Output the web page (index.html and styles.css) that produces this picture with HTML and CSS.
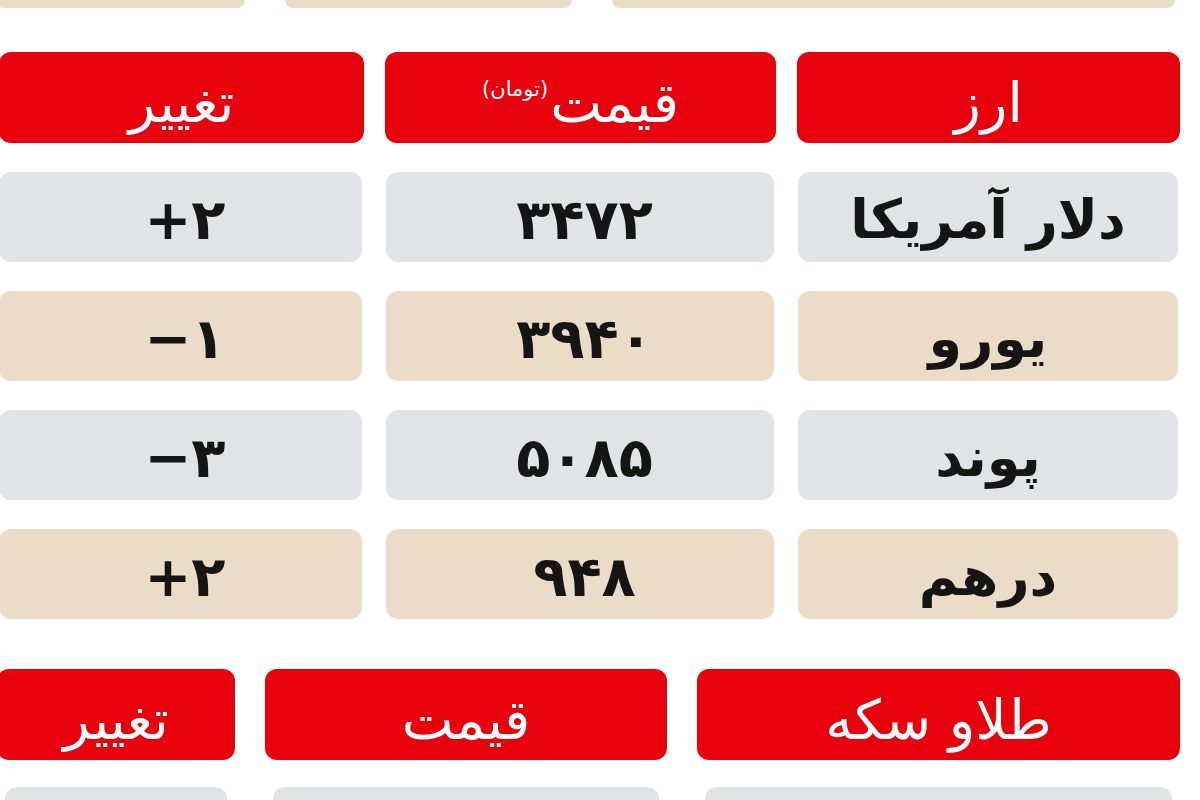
FILE: index.html
```html
<!DOCTYPE html>
<html lang="fa" dir="rtl">
<head>
<meta charset="utf-8">
<title>نرخ ارز</title>
<link rel="stylesheet" href="styles.css">
</head>
<body>
<div class="page">
  <div class="row partial-top">
    <div class="cell beige"></div>
    <div class="cell beige"></div>
    <div class="cell beige"></div>
  </div>

  <section class="table currency">
    <div class="row head">
      <div class="cell red">ارز</div>
      <div class="cell red">قیمت<sup>(تومان)</sup></div>
      <div class="cell red">تغییر</div>
    </div>
    <div class="row data">
      <div class="cell grey">دلار آمریکا</div>
      <div class="cell grey num">۳۴۷۲</div>
      <div class="cell grey num ltr">+۲</div>
    </div>
    <div class="row data">
      <div class="cell beige">یورو</div>
      <div class="cell beige num">۳۹۴۰</div>
      <div class="cell beige num ltr">−۱</div>
    </div>
    <div class="row data">
      <div class="cell grey">پوند</div>
      <div class="cell grey num">۵۰۸۵</div>
      <div class="cell grey num ltr">−۳</div>
    </div>
    <div class="row data">
      <div class="cell beige">درهم</div>
      <div class="cell beige num">۹۴۸</div>
      <div class="cell beige num ltr">+۲</div>
    </div>
  </section>

  <section class="table gold">
    <div class="row head">
      <div class="cell red">طلاو سکه</div>
      <div class="cell red">قیمت</div>
      <div class="cell red">تغییر</div>
    </div>
    <div class="row data partial-bottom">
      <div class="cell grey"></div>
      <div class="cell grey"></div>
      <div class="cell grey"></div>
    </div>
  </section>
</div>
</body>
</html>
```

FILE: styles.css
```css
html, body {
  margin: 0;
  padding: 0;
  background: #ffffff;
}

body {
  width: 1200px;
  height: 800px;
  overflow: hidden;
  font-family: "DejaVu Sans", "Noto Sans", sans-serif;
  direction: rtl;
}

.page {
  display: flex;
  flex-direction: column;
}

.row {
  display: grid;
  direction: rtl;
}

.cell {
  display: flex;
  align-items: center;
  justify-content: center;
  border-radius: 12px;
  box-sizing: border-box;
}

.red {
  background: #e8000d;
  color: #ffffff;
  font-size: 55px;
  font-weight: normal;
  padding-top: 10px;
}

.grey {
  background: #e1e3e7;
}

.beige {
  background: #ebdcc8;
}

.data .cell {
  color: #151515;
  font-size: 54px;
  font-weight: bold;
  padding-top: 4px;
}

.data .cell.num {
  font-size: 56px;
  letter-spacing: 9px;
  padding-left: 9px;
}

.ltr {
  direction: ltr;
}

/* top partial row */
.partial-top {
  height: 8px;
  padding-right: 25px;
  grid-template-columns: 563px 287px 249px;
  column-gap: 40px;
  margin-left: -50px;
}

.partial-top .cell {
  border-radius: 0 0 10px 10px;
}

/* currency table */
.currency {
  margin-top: 44px;
  display: flex;
  flex-direction: column;
  row-gap: 29px;
}

.currency .row {
  grid-template-columns: 383px 391px 365px;
  column-gap: 21px;
  padding-right: 20px;
}

.currency .head {
  height: 91px;
}

.currency .data {
  height: 90px;
}

.currency .data .cell {
  margin: 0 2px 0 1px;
}

.currency .data .cell:last-child {
  margin: 0 2px 0 0;
}

sup {
  font-size: 21px;
  vertical-align: top;
  position: relative;
  top: -14px;
  margin-right: 2px;
}

/* gold table */
.gold {
  margin-top: 50px;
  display: flex;
  flex-direction: column;
  row-gap: 27px;
}

.gold .row {
  grid-template-columns: 483px 402px 238px;
  column-gap: 30px;
  padding-right: 20px;
}

.gold .head {
  height: 91px;
}

.gold .partial-bottom {
  height: 40px;
}

.gold .partial-bottom .cell {
  margin: 0 8px;
}
```
